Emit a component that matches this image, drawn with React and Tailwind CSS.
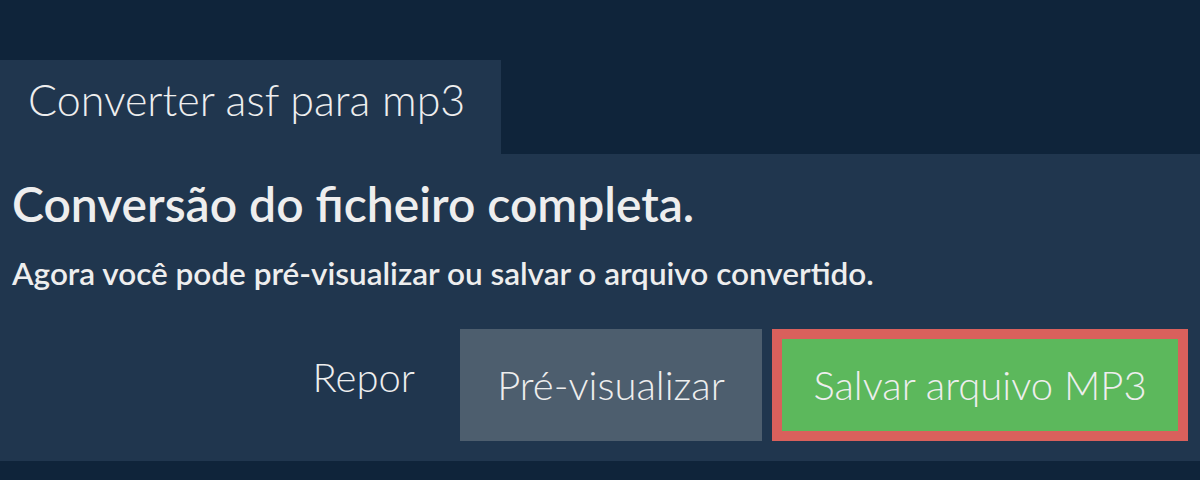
import React from 'react';

export default function App() {
    return (
        <div className="h-[480px] w-[1200px] bg-[#0f243a] pt-[60px] text-[#eeeeee] overflow-hidden" style={{ fontFamily: 'Lato, "Open Sans", sans-serif' }}>
            {/* Tab */}
            <div className="w-[501px] h-[94px] bg-[#20364e] pl-[28px] pt-[12px]">
                <h1 className="text-[43px] font-light leading-[56px]">Converter asf para mp3</h1>
            </div>

            {/* Panel */}
            <div className="h-[307px] bg-[#20364e] px-[12px] pt-[22px]">
                <h2 className="text-[48px] font-semibold leading-[56px]">Conversão do ficheiro completa.</h2>
                <p className="mt-[21px] text-[31.5px] font-semibold leading-[40px]">Agora você pode pré-visualizar ou salvar o arquivo convertido.</p>

                <div className="mt-[36px] flex items-start justify-end">
                    <button className="mr-[45px] mt-[24px] text-[40px] font-light leading-[48px]">Repor</button>
                    <button className="w-[302px] h-[112px] bg-[#4d5e6e] text-[40px] font-light leading-[48px]">Pré-visualizar</button>
                    <button className="ml-[10px] w-[416px] h-[112px] border-[10px] border-[#d9605c] bg-[#5cb85c] text-[40px] font-light leading-[48px]">Salvar arquivo MP3</button>
                </div>
            </div>
        </div>
    );
}
